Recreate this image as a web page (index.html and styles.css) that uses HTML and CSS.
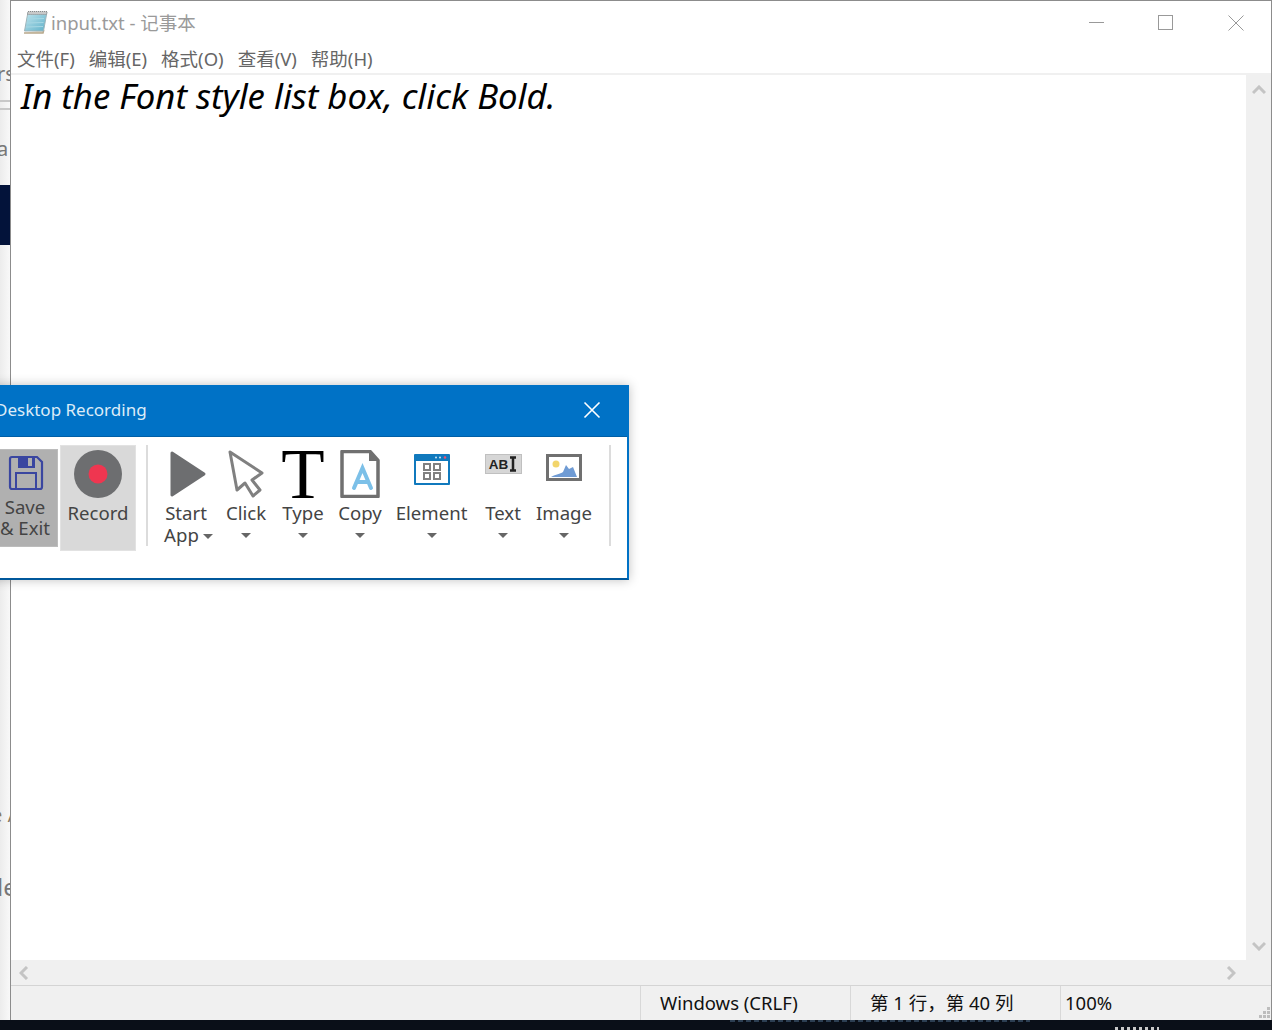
FILE: index.html
```html
<!DOCTYPE html>
<html lang="en">
<head>
    <meta charset="UTF-8">
    <title>input.txt - 记事本</title>
    <link rel="stylesheet" href="styles.css">
</head>
<body>
<div class="desktop">
    <div class="back-window">
        <span class="frag frag-rs">rs</span>
        <span class="frag-rule rule-a"></span>
        <span class="frag-rule rule-b"></span>
        <span class="frag frag-a">a</span>
        <span class="frag-dark"></span>
        <span class="frag frag-e">e /</span>
        <span class="frag frag-le">le</span>
    </div>

    <div class="notepad">
        <div class="titlebar">
            <svg class="app-icon" width="26" height="26" viewBox="0 0 26 26">
                <defs>
                    <linearGradient id="padfill" x1="0" y1="0" x2="1" y2="1">
                        <stop offset="0" stop-color="#c4e6ee"/>
                        <stop offset=".6" stop-color="#86c6d8"/>
                        <stop offset="1" stop-color="#5fb0c8"/>
                    </linearGradient>
                </defs>
                <path d="M2 24h19l.8-3" fill="#e4dcc8" stroke="#b8a88c" stroke-width="1.500"/>
                <path d="M6 3h19l-3.500 19H2.500z" fill="url(#padfill)" stroke="#9fb4ba"/>
                <path d="M5 10l17-.5M4.500 14l17-.5M4 18l17-.5" stroke="#a8d8e4" stroke-width="1"/>
                <path d="M6 2.500h19l-.6 3H5.400z" fill="#c8c8c8" stroke="#8a8a8a" stroke-dasharray="1 1"/>
            </svg>
            <span class="title-text">input.txt - 记事本</span>
            <div class="win-controls">
                <svg width="16" height="16" viewBox="0 0 16 16"><path d="M1 7.500h15" stroke="#999"/></svg>
                <svg width="16" height="16" viewBox="0 0 16 16"><rect x=".5" y=".5" width="14" height="14" fill="none" stroke="#999"/></svg>
                <svg width="16" height="16" viewBox="0 0 16 16"><path d="M.5.5l15 15M15.500.5l-15 15" stroke="#999"/></svg>
            </div>
        </div>
        <div class="menubar">
            <span>文件(F)</span>
            <span>编辑(E)</span>
            <span>格式(O)</span>
            <span>查看(V)</span>
            <span>帮助(H)</span>
        </div>
        <div class="edit-row">
            <div class="edit-area">In the Font style list box, click Bold.</div>
            <div class="vscroll">
                <svg width="14" height="10" viewBox="0 0 14 10"><path d="M1 8l6-6 6 6" fill="none" stroke="#c4c4c4" stroke-width="3"/></svg>
                <svg width="14" height="10" viewBox="0 0 14 10"><path d="M1 2l6 6 6-6" fill="none" stroke="#c4c4c4" stroke-width="3"/></svg>
            </div>
        </div>
        <div class="hscroll">
            <svg width="10" height="14" viewBox="0 0 10 14"><path d="M8 1L2 7l6 6" fill="none" stroke="#c4c4c4" stroke-width="3"/></svg>
            <svg width="10" height="14" viewBox="0 0 10 14"><path d="M2 1l6 6-6 6" fill="none" stroke="#c4c4c4" stroke-width="3"/></svg>
        </div>
        <div class="statusbar">
            <div class="status-cell cell-eol">Windows (CRLF)</div>
            <div class="status-cell cell-pos">第 1 行，第 40 列</div>
            <div class="status-cell cell-zoom">100%</div>
            <svg class="grip" width="12" height="12" viewBox="0 0 12 12" fill="#bdbdbd">
                <rect x="8" y="0" width="3" height="3"/>
                <rect x="4" y="4" width="3" height="3"/><rect x="8" y="4" width="3" height="3"/>
                <rect x="0" y="8" width="3" height="3"/><rect x="4" y="8" width="3" height="3"/><rect x="8" y="8" width="3" height="3"/>
            </svg>
        </div>
    </div>

    <div class="taskbar">
        <span class="task-smear smear-blue"></span>
        <span class="task-smear smear-white"></span>
    </div>

    <div class="recorder">
        <div class="rec-title">
            <span>Desktop Recording</span>
            <svg width="18" height="18" viewBox="0 0 18 18"><path d="M1.500 1.500l15 15M16.500 1.500l-15 15" stroke="#fff" stroke-width="1.600"/></svg>
        </div>
        <div class="rec-body">
            <div class="btn-save">
                <svg width="36" height="36" viewBox="0 0 36 36">
                    <path d="M2 4a2 2 0 0 1 2-2h25l5 5v25a2 2 0 0 1-2 2H4a2 2 0 0 1-2-2z" fill="none" stroke="#3a46a0" stroke-width="2.200"/>
                    <path d="M10 2h17v11H10z" fill="#3a46a0"/>
                    <rect x="20" y="3" width="4" height="8" fill="#b0b0b0"/>
                    <path d="M8 34V18h20v16" fill="none" stroke="#3a46a0" stroke-width="2"/>
                </svg>
                <div class="save-label">Save<br>&amp; Exit</div>
            </div>
            <div class="btn-record">
                <svg width="48" height="48" viewBox="0 0 48 48">
                    <circle cx="24" cy="24" r="24" fill="#6d6e70"/>
                    <circle cx="24" cy="24" r="9.500" fill="#ef3650"/>
                </svg>
                <div class="tool-label">Record</div>
            </div>
            <div class="sep sep-first"></div>

            <div class="tool tool-start">
                <svg width="48" height="48" viewBox="0 0 48 48">
                    <path d="M10 3l32 21-32 21z" fill="#6d6e70" stroke="#6d6e70" stroke-width="3" stroke-linejoin="round"/>
                </svg>
                <div class="tool-label">Start</div>
                <div class="tool-label label-app">App<i class="caret caret-inline"></i></div>
            </div>
            <div class="tool tool-click">
                <svg width="48" height="48" viewBox="0 0 48 48">
                    <path d="M8 2l32 21-10 7 8 10-7 6-8-13-8 7z" fill="#fff" stroke="#808080" stroke-width="3" stroke-linejoin="round"/>
                </svg>
                <div class="tool-label">Click</div>
                <div class="caret-row"><i class="caret"></i></div>
            </div>
            <div class="tool tool-type">
                <div class="type-glyph">T</div>
                <div class="tool-label">Type</div>
                <div class="caret-row"><i class="caret"></i></div>
            </div>
            <div class="tool tool-copy">
                <svg width="48" height="48" viewBox="0 0 48 48">
                    <path d="M6 1.500h28l8 9v36H6z" fill="#fff" stroke="#707070" stroke-width="3.500" stroke-linejoin="round"/>
                    <path d="M33 2l9 9h-9z" fill="#707070"/>
                    <path d="M18 38l8.500-20 8.500 20M21 32h11" fill="none" stroke="#7cc0e8" stroke-width="4" stroke-linecap="round"/>
                </svg>
                <div class="tool-label">Copy</div>
                <div class="caret-row"><i class="caret"></i></div>
            </div>
            <div class="tool tool-element">
                <svg width="48" height="48" viewBox="0 0 48 48">
                    <rect x="6" y="4" width="36" height="31" rx="1" fill="#1079bd"/>
                    <rect x="8" y="11" width="32" height="22" fill="#fff"/>
                    <circle cx="28" cy="7.500" r="1" fill="#cfe6f5"/><circle cx="32" cy="7.500" r="1" fill="#cfe6f5"/><circle cx="37" cy="7.500" r="1.300" fill="#ef5070"/>
                    <g fill="none" stroke="#808080" stroke-width="2">
                        <rect x="16" y="14" width="6" height="6"/><rect x="26" y="14" width="6" height="6"/>
                        <rect x="16" y="23" width="6" height="6"/><rect x="26" y="23" width="6" height="6"/>
                    </g>
                </svg>
                <div class="tool-label">Element</div>
                <div class="caret-row"><i class="caret"></i></div>
            </div>
            <div class="tool tool-text">
                <div class="abi-box"><b>AB</b><svg width="8" height="16" viewBox="0 0 8 16"><path d="M1 1.500h6M4 1v14M1 14.500h6" fill="none" stroke="#222" stroke-width="2.500"/></svg></div>
                <div class="tool-label">Text</div>
                <div class="caret-row"><i class="caret"></i></div>
            </div>
            <div class="tool tool-image">
                <svg width="48" height="48" viewBox="0 0 48 48">
                    <rect x="7.500" y="5.500" width="33" height="24" fill="#fff" stroke="#707070" stroke-width="3"/>
                    <circle cx="16" cy="14" r="3.500" fill="#f2d56b"/>
                    <path d="M11 27c5-3 9-3 12-5l3-7 3 4 4-2 4 10z" fill="#6f9bd4"/>
                </svg>
                <div class="tool-label">Image</div>
                <div class="caret-row"><i class="caret"></i></div>
            </div>
            <div class="sep sep-last"></div>
        </div>
    </div>
</div>
</body>
</html>
```

FILE: styles.css
```css
html, body {
    margin: 0;
    padding: 0;
    background: #fff;
}

.desktop {
    position: relative;
    width: 1272px;
    height: 1030px;
    overflow: hidden;
    font-family: "Noto Sans", "Noto Sans CJK SC", sans-serif;
}

/* window behind notepad, only a strip of it shows */
.back-window {
    position: absolute;
    left: 0;
    top: 0;
    width: 11px;
    height: 1020px;
    overflow: hidden;
    background: linear-gradient(to right, #ececec, #fafafa);
}

.frag {
    position: absolute;
    color: #777;
    font-size: 20px;
    line-height: 24px;
    white-space: pre;
}
.frag-rs { left: -3px; top: 62px; }
.frag-a { left: -3px; top: 137px; }
.frag-e { left: -9px; top: 803px; color: #8a7a60; }
.frag-le { left: -3px; top: 873px; font-size: 24px; line-height: 28px; }

.frag-rule {
    position: absolute;
    left: 0;
    width: 11px;
    height: 2px;
    background: #c8c8c8;
}
.rule-a { top: 100px; }
.rule-b { top: 108px; }

.frag-dark {
    position: absolute;
    left: 0;
    top: 185px;
    width: 11px;
    height: 60px;
    background: #03133a;
}

.notepad {
    position: absolute;
    left: 10px;
    top: 0;
    width: 1262px;
    height: 1021px;
    box-sizing: border-box;
    border: 1px solid #8c8c8c;
    background: #fff;
    display: flex;
    flex-direction: column;
}

.titlebar {
    display: flex;
    align-items: center;
    height: 42px;
    padding-left: 11px;
    color: #9a9a9a;
    font-size: 18.5px;
}

.app-icon {
    margin-right: 3px;
}

.win-controls {
    margin-left: auto;
    display: flex;
    gap: 54px;
    padding-right: 27px;
    padding-top: 2px;
}

.menubar {
    display: flex;
    gap: 14px;
    height: 30px;
    padding-left: 6px;
    color: #666;
    font-size: 18.5px;
    line-height: 32px;
    border-bottom: 2px solid #f0f0f0;
}

.edit-row {
    flex: 1;
    display: flex;
    min-height: 0;
}

.edit-area {
    flex: 1;
    padding: 0 0 0 10px;
    color: #000;
    font-size: 34.7px;
    font-style: italic;
    line-height: 42px;
}

.vscroll {
    width: 25px;
    background: #f0f0f0;
    display: flex;
    flex-direction: column;
    align-items: center;
    justify-content: space-between;
    padding: 10px 0 9px;
    box-sizing: border-box;
}

.hscroll {
    height: 25px;
    background: #f0f0f0;
    display: flex;
    align-items: center;
    justify-content: space-between;
    padding: 0 35px 0 8px;
}

.statusbar {
    position: relative;
    height: 34px;
    display: flex;
    background: #f0f0f0;
    border-top: 1px solid #d4d4d4;
    color: #111;
    font-size: 18.5px;
    line-height: 34px;
    padding-left: 629px;
}

.status-cell {
    border-left: 1px solid #d8d8d8;
    box-sizing: border-box;
    width: 210px;
    white-space: nowrap;
}
.cell-eol { padding-left: 19px; }
.cell-pos { padding-left: 19px; }
.cell-zoom { padding-left: 4px; }

/* resize handle */
.grip {
    position: absolute;
    right: 0;
    bottom: 1px;
}

.taskbar {
    position: absolute;
    left: 0;
    top: 1020px;
    width: 1272px;
    height: 10px;
    background: #0a0f18;
}

.task-smear {
    position: absolute;
}
.smear-blue {
    left: 730px;
    top: 0;
    width: 300px;
    height: 2px;
    background: repeating-linear-gradient(to right, #2c3e52 0 5px, #0a0f18 5px 8px);
}
.smear-white {
    left: 1115px;
    top: 7px;
    width: 44px;
    height: 3px;
    background: repeating-linear-gradient(to right, #c8c8c8 0 3px, #0a0f18 3px 6px);
}

/* floating recorder dialog */
.recorder {
    position: absolute;
    left: -20px;
    top: 385px;
    width: 649px;
    height: 195px;
    box-sizing: border-box;
    border: 2px solid #0072c6;
    border-bottom-color: #00589c;
    background: #fff;
    box-shadow: 0 0 10px rgba(0, 0, 0, .25);
}

.rec-title {
    display: flex;
    align-items: center;
    justify-content: space-between;
    height: 50px;
    padding: 0 26px 4px 13px;
    box-sizing: border-box;
    background: #0072c6;
    border-bottom: 1px solid #005fa6;
    color: #dcecf8;
    font-size: 17px;
}

.rec-body {
    display: flex;
    align-items: flex-start;
    padding-top: 8px;
    color: #444;
    font-size: 18.6px;
}

.btn-save {
    width: 76px;
    height: 98px;
    margin-top: 4px;
    padding-left: 10px;
    box-sizing: border-box;
    background: #b0b0b0;
    border: 1px solid #bcbcbc;
    display: flex;
    flex-direction: column;
    align-items: center;
    flex: none;
}
.btn-save svg {
    margin-top: 5px;
    margin-left: 2px;
}

.save-label {
    margin-top: 5px;
    text-align: center;
    line-height: 21px;
    white-space: nowrap;
}

.btn-record {
    width: 76px;
    height: 106px;
    margin-left: 2px;
    padding-top: 4px;
    box-sizing: border-box;
    background: #d9d9d9;
    border: 1px solid #e2e2e2;
    display: flex;
    flex-direction: column;
    align-items: center;
    flex: none;
}

.sep {
    width: 2px;
    height: 101px;
    background: #dcdcdc;
    flex: none;
}
.sep-first { margin-left: 10px; margin-right: 7px; }
.sep-last { margin-left: 13px; }

.tool {
    display: flex;
    flex-direction: column;
    align-items: center;
    padding-top: 5px;
    flex: none;
}
.tool > svg {
    display: block;
}
.tool-start { width: 62px; }
.tool-click { width: 58px; }
.tool-type { width: 56px; }
.tool-copy { width: 58px; }
.tool-element { width: 85px; }
.tool-text { width: 58px; }
.tool-image { width: 64px; }

.tool-label {
    line-height: 22px;
    white-space: nowrap;
}
.tool > svg + .tool-label,
.type-glyph + .tool-label,
.abi-box + .tool-label,
.btn-record .tool-label {
    margin-top: 4px;
}
.label-app {
    margin-left: 5px;
}

.type-glyph {
    height: 48px;
    font-family: "Liberation Serif", serif;
    font-size: 71px;
    line-height: 48px;
    color: #000;
}

.abi-box {
    display: flex;
    align-items: center;
    justify-content: center;
    gap: 1px;
    width: 37px;
    height: 20px;
    margin-top: 4px;
    margin-bottom: 24px;
    background: #d6d6d6;
    border: 1px solid #c0c0c0;
    box-sizing: border-box;
    color: #222;
    font-family: "Liberation Sans", sans-serif;
    font-size: 13.5px;
}

.caret-row {
    height: 22px;
    display: flex;
    align-items: center;
    justify-content: center;
}

.caret {
    display: inline-block;
    width: 0;
    height: 0;
    border-left: 5px solid transparent;
    border-right: 5px solid transparent;
    border-top: 5px solid #666;
}
.caret-inline {
    margin-left: 4px;
    vertical-align: 3px;
}
```
